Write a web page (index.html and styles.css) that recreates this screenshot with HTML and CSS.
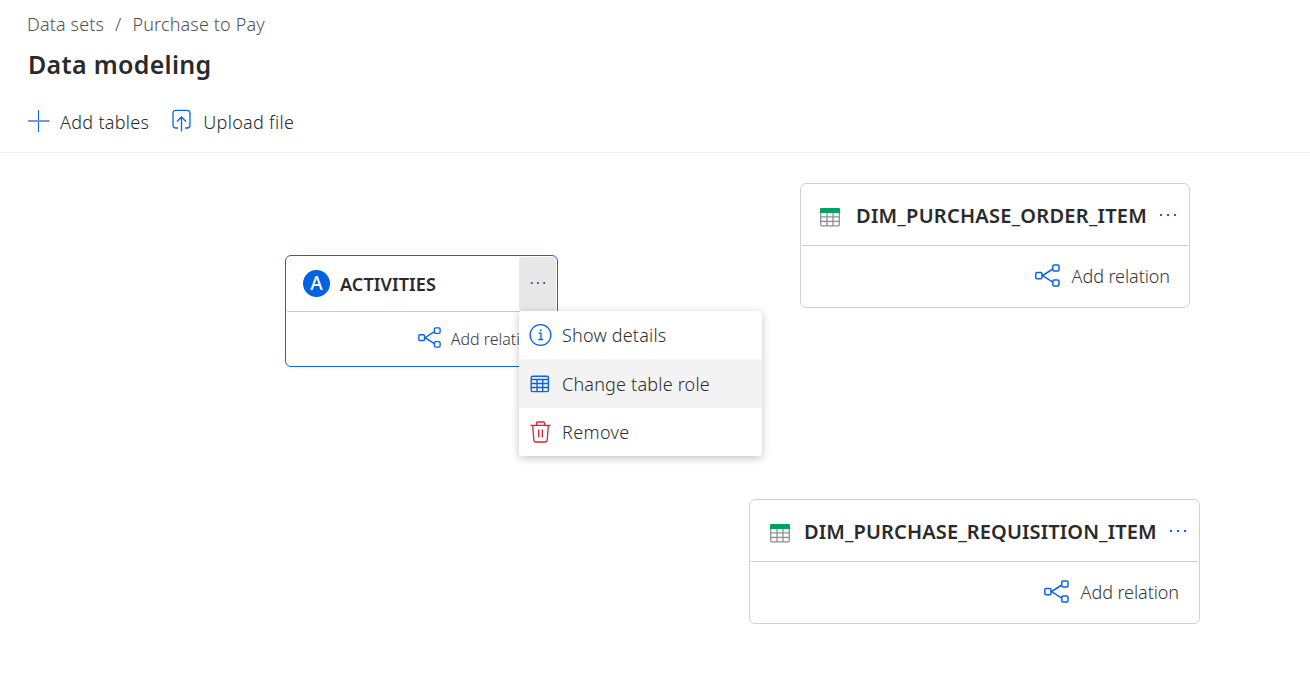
FILE: index.html
```html
<!DOCTYPE html>
<html lang="en">
<head>
<meta charset="utf-8">
<title>Data modeling</title>
<link rel="stylesheet" href="styles.css">
</head>
<body>
<svg class="sprite" aria-hidden="true">
  <symbol id="relation" viewBox="0 0 26 24">
    <g fill="none" stroke="currentColor" stroke-width="1.5">
      <rect x=".8" y="8.5" width="6.2" height="6.2" rx="1.2"/>
      <rect x="17.8" y="1" width="6.200" height="6" rx="1.2"/>
      <rect x="17.8" y="16" width="6.200" height="6" rx="1.2"/>
      <path d="M17.800 5L7.500 11.600l10.300 6.600"/>
    </g>
  </symbol>
  <symbol id="dots" viewBox="0 0 18 4">
    <path fill="currentColor" d="M1 1h2v2H1zM8 1h2v2H8zM15 1h2v2h-2z"/>
  </symbol>
  <symbol id="datatable" viewBox="0 0 20 19">
    <path fill="none" stroke="#8f8f8f" stroke-width="1.3" d="M.7 4v12.800q0 1.100 1.100 1.100h16.400q1.100 0 1.100-1.100V4M.7 8.800h18.600M.7 13.400h18.600M7 4v14M13 4v14"/>
    <path fill="#00a35e" d="M0 5V1q0-1 1-1h18q1 0 1 1v4z"/>
  </symbol>
</svg>
<header class="header">
  <nav class="crumbs"><span>Data sets</span><span class="slash">/</span><span>Purchase to Pay</span></nav>
  <h1 class="title">Data modeling</h1>
  <div class="toolbar">
    <div class="tool">
      <svg class="plus" viewBox="0 0 22 22"><path fill="none" stroke="#0b63e5" d="M10.500 0v22"/><path fill="none" stroke="#7d92e4" stroke-width="2" d="M0 11h21.500"/></svg>
      <span>Add tables</span>
    </div>
    <div class="tool">
      <svg class="upload" viewBox="0 0 20 24"><path fill="none" stroke="#0b63e5" stroke-width="1.300" d="M6 19H4Q1 19 1 16V4.200Q1 1.300 4 1.300h11q3 0 3 2.900V16q0 3-3 3h-2M9.500 22.500V8.500M5 12.500L9.500 8l4.500 4.500"/></svg>
      <span>Upload file</span>
    </div>
  </div>
</header>
<main class="canvas">
  <section class="node node-activities">
    <div class="node-head">
      <span class="badge">A</span>
      <span class="node-name">ACTIVITIES</span>
      <button class="more"><svg class="dots"><use href="#dots"/></svg></button>
    </div>
    <div class="node-foot"><svg class="relation"><use href="#relation"/></svg><span>Add relation</span></div>
  </section>
  <section class="node node-order">
    <div class="node-head">
      <svg class="datatable"><use href="#datatable"/></svg>
      <span class="node-name">DIM_PURCHASE_ORDER_ITEM</span>
      <svg class="dots"><use href="#dots"/></svg>
    </div>
    <div class="node-foot"><svg class="relation"><use href="#relation"/></svg><span>Add relation</span></div>
  </section>
  <section class="node node-requisition">
    <div class="node-head">
      <svg class="datatable"><use href="#datatable"/></svg>
      <span class="node-name">DIM_PURCHASE_REQUISITION_ITEM</span>
      <svg class="dots"><use href="#dots"/></svg>
    </div>
    <div class="node-foot"><svg class="relation"><use href="#relation"/></svg><span>Add relation</span></div>
  </section>
  <div class="menu">
    <div class="item">
      <svg class="menu-icon" viewBox="0 0 24 24"><g fill="none" stroke="#0b63e5" stroke-width="1.300"><circle cx="12.500" cy="12" r="10.400"/><path d="M10.500 10.200h2.500v6M10.300 16.500h5"/></g><path fill="#0b63e5" d="M11.800 6.500h1.700v1.700h-1.700z"/></svg>
      <span>Show details</span>
    </div>
    <div class="item active">
      <svg class="menu-icon" viewBox="0 0 24 24"><g fill="none" stroke="#0b63e5" stroke-width="1.400"><rect x="3.200" y="4.200" width="17.200" height="15.400" rx="1.500"/><path d="M3 7.500h17.500M3 11.500h17.500M3 15.500h17.500M9 7v12.500M14.700 7v12.500"/></g></svg>
      <span>Change table role</span>
    </div>
    <div class="item">
      <svg class="menu-icon" viewBox="0 0 24 24"><path fill="none" stroke="#e01e37" stroke-width="1.300" d="M2.500 5.400h20M8.500 5V3q0-1 1-1h6q1 0 1 1v2M4.700 5.500l1.100 14.800q.1 1.700 1.800 1.700h9.800q1.700 0 1.800-1.700l1.100-14.800M10.700 9.500v8M14.300 9.500v8"/></svg>
      <span class="m-remove">Remove</span>
    </div>
  </div>
</main>
</body>
</html>
```
FILE: styles.css
```css
* { box-sizing: border-box; }
body {
  margin: 0;
  width: 1310px;
  height: 695px;
  overflow: hidden;
  display: flex;
  flex-direction: column;
  background: #fff;
  color: #2a2a2a;
  font-family: "Noto Sans", "Open Sans", sans-serif;
  font-size: 18px;
  font-weight: 350;
  white-space: nowrap;
}
svg { display: block; flex: none; }
.sprite { position: absolute; width: 0; height: 0; }
.header { height: 153px; padding: 11px 28px 0; border-bottom: 1px solid #f0f0f0; }
.crumbs { display: flex; height: 26px; margin-left: -1px; line-height: 26px; color: #525252; letter-spacing: .14px; }
.slash { margin: 0 11px; }
.title { margin: 10px 0 0; font-size: 25px; line-height: 34px; font-weight: 600; letter-spacing: .3px; }
.toolbar { display: flex; gap: 23px; margin-top: 24px; height: 34px; }
.tool { display: flex; line-height: 34px; letter-spacing: .3px; }
.plus { width: 22px; height: 22px; margin: 5px 10px 0 0; }
.upload { width: 20px; height: 24px; margin: 4px 11px 0 0; }
.canvas { position: relative; flex: 1; }
.node {
  position: absolute;
  display: flex;
  flex-direction: column;
  border: 1px solid #d2d2d2;
  border-radius: 6px;
  background: #fff;
}
.node-head { display: flex; align-items: center; height: 62px; margin: 0 1px; border-bottom: 1px solid #ccc; }
.node-name { font-weight: 600; font-size: 20px; letter-spacing: .25px; }
.node-foot { display: flex; flex: 1; align-items: center; justify-content: flex-end; color: #383838; letter-spacing: -.08px; }
.node-order { left: 800px; top: 30px; width: 390px; height: 125px; }
.node-requisition { left: 749px; top: 346px; width: 451px; height: 125px; }
.node-order .node-head, .node-requisition .node-head { padding: 2px 11px 0 18px; }
.node-order .node-foot, .node-requisition .node-foot { padding: 0 19px 1px 0; }
.node-requisition .node-foot { padding-right: 20px; }
.node-order .dots, .node-requisition .dots { margin: -2px 0 0 auto; }
.datatable { width: 20px; height: 19px; margin: 3px 16px 0 0; }
.node-requisition .datatable { margin-right: 14px; margin-left: 1px; }
.node-requisition .node-name { letter-spacing: .13px; }
.dots { width: 18px; height: 4px; color: #0b63e5; }
.relation { width: 26px; height: 24px; margin: -1px 11px 0 0; color: #0b63e5; }
.node-activities { left: 285px; top: 102px; width: 273px; height: 112px; border-color: #0b63e5; }
.node-activities .node-head { height: 56px; padding-left: 16px; }
.node-activities .node-name { font-size: 18px; letter-spacing: .1px; }
.badge {
  width: 27px;
  height: 27px;
  margin-right: 10px;
  border-radius: 50%;
  background: #0062e3;
  color: #fff;
  font-size: 19px;
  font-weight: 500;
  line-height: 26px;
  text-align: center;
}
.more {
  display: grid;
  place-items: center;
  width: 37px;
  height: 54px;
  margin: 1px 0 0 auto;
  padding: 0 0 3px;
  border: 0;
  border-radius: 3px;
  background: #e8e8e8;
}
.more .dots { width: 16px; color: #3b5998; }
.node-activities .node-foot { padding-right: 18px; font-size: 16px; letter-spacing: 0; }
.node-activities .relation { width: 24px; height: 22px; margin: -3px 9px 0 0; }
.menu {
  position: absolute;
  left: 519px;
  top: 158px;
  width: 243px;
  height: 145px;
  border-radius: 3px;
  background: #fff;
  box-shadow: 0 2px 8px rgba(0, 0, 0, .24);
  color: #2e2e2e;
  letter-spacing: .2px;
}
.item { display: flex; align-items: center; height: 48.4px; padding-left: 9px; gap: 10px; }
.active { background: #f3f3f3; }
.menu-icon { width: 24px; height: 24px; }
.m-remove { letter-spacing: .35px; }
```
